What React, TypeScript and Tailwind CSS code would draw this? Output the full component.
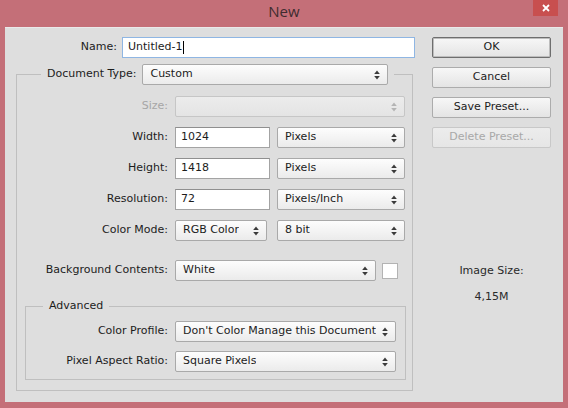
import type { ReactNode } from "react";

function Arrows({ disabled }: { disabled?: boolean }) {
  const c = disabled ? "#b4b4b4" : "#3a3a3a";
  return (
    <svg width="6" height="10" viewBox="0 0 6 10" className="shrink-0">
      <path d="M3 0.5 L5.8 4 L0.2 4 Z" fill={c} />
      <path d="M0.2 6 L5.8 6 L3 9.5 Z" fill={c} />
    </svg>
  );
}

function Select({
  value,
  width,
  disabled,
}: {
  value?: string;
  width: string;
  disabled?: boolean;
}) {
  return (
    <div
      className={`${width} h-[21px] shrink-0 flex items-center justify-between pl-[7px] pr-[7px] rounded-[2px] border ${
        disabled
          ? "border-[#c6c6c6] bg-gradient-to-b from-[#ececec] to-[#e4e4e4]"
          : "border-[#a9a9a9] bg-gradient-to-b from-[#fdfdfd] to-[#ebebeb]"
      }`}
    >
      <span className="truncate">{value}</span>
      <Arrows disabled={disabled} />
    </div>
  );
}

function Input({ value, width }: { value: string; width: string }) {
  return (
    <div
      className={`${width} h-[21px] shrink-0 flex items-center pl-[5px] bg-white border border-[#a3a3a3] border-t-[#8f8f8f]`}
    >
      {value}
    </div>
  );
}

function Row({
  label,
  labelWidth,
  disabled,
  children,
}: {
  label: string;
  labelWidth: string;
  disabled?: boolean;
  children: ReactNode;
}) {
  return (
    <div className="flex items-center h-[21px]">
      <span
        className={`${labelWidth} shrink-0 text-right pr-[7px] ${
          disabled ? "text-[#a6a6a6]" : ""
        }`}
      >
        {label}
      </span>
      {children}
    </div>
  );
}

function Button({
  children,
  primary,
  disabled,
}: {
  children: ReactNode;
  primary?: boolean;
  disabled?: boolean;
}) {
  const tone = primary
    ? "border-[#6e6e6e] shadow-[inset_0_0_0_1px_#bdbdbd] bg-gradient-to-b from-[#f7f7f7] to-[#e4e4e4]"
    : disabled
      ? "border-[#c8c8c8] text-[#a8a8a8] bg-gradient-to-b from-[#ececec] to-[#e6e6e6]"
      : "border-[#acacac] bg-gradient-to-b from-[#f7f7f7] to-[#e4e4e4]";
  return (
    <button
      type="button"
      className={`w-[119px] h-[21px] border rounded-[2px] flex items-center justify-center ${tone}`}
    >
      {children}
    </button>
  );
}

export default function App() {
  return (
    <div className="w-[568px] h-[408px] bg-[#c46f78] flex flex-col font-['DejaVu_Sans',sans-serif] text-[11px] text-[#1c1c1c] overflow-hidden">
      {/* title bar */}
      <div className="h-[27px] shrink-0 relative flex justify-center">
        <span className="font-['Open_Sans',sans-serif] text-[15px] leading-[22px] text-[#3e2c2f]">
          New
        </span>
        <div className="absolute right-[10px] top-0 w-[25px] h-[16px] bg-[#c84f4f] flex items-center justify-center">
          <svg width="8" height="8" viewBox="0 0 8 8">
            <path d="M1 1 L7 7 M7 1 L1 7" stroke="#fff" strokeWidth="1.8" />
          </svg>
        </div>
      </div>

      {/* dialog body */}
      <div className="mx-[5px] mb-[6px] flex-1 bg-[#dedede] border-t border-[#eaeaea] flex">
        {/* left column */}
        <div className="w-[427px] shrink-0 pt-[9px]">
          <div className="flex items-center h-[21px]">
            <span className="w-[117px] text-right pr-[5px]">Name:</span>
            <div className="w-[293px] h-[21px] flex items-center pl-[5px] bg-white border border-[#8fb6e3]">
              Untitled-1
              <span className="inline-block w-px h-[13px] bg-black ml-px" />
            </div>
          </div>

          <fieldset className="ml-[11px] mt-[6px] w-[397px] border border-[#bfbfbf] pb-[10px]">
            <legend className="ml-[24px] px-[6px] flex items-center">
              <span className="pr-[6px]">Document Type:</span>
              <Select value="Custom" width="w-[246px]" />
            </legend>

            <div className="mt-[11px] flex flex-col gap-[10px]">
              <Row label="Size:" labelWidth="w-[158px]" disabled>
                <Select width="w-[230px]" disabled />
              </Row>
              <Row label="Width:" labelWidth="w-[158px]">
                <Input value="1024" width="w-[95px]" />
                <div className="ml-[7px]">
                  <Select value="Pixels" width="w-[128px]" />
                </div>
              </Row>
              <Row label="Height:" labelWidth="w-[158px]">
                <Input value="1418" width="w-[95px]" />
                <div className="ml-[7px]">
                  <Select value="Pixels" width="w-[128px]" />
                </div>
              </Row>
              <Row label="Resolution:" labelWidth="w-[158px]">
                <Input value="72" width="w-[95px]" />
                <div className="ml-[7px]">
                  <Select value="Pixels/Inch" width="w-[128px]" />
                </div>
              </Row>
              <Row label="Color Mode:" labelWidth="w-[158px]">
                <Select value="RGB Color" width="w-[92px]" />
                <div className="ml-[10px]">
                  <Select value="8 bit" width="w-[128px]" />
                </div>
              </Row>
            </div>

            <div className="mt-[19px]">
              <Row label="Background Contents:" labelWidth="w-[158px]">
                <Select value="White" width="w-[201px]" />
                <div className="ml-[6px] w-[16px] h-[16px] bg-white border border-[#b3b3b3]" />
              </Row>
            </div>

            <fieldset className="ml-[8px] mt-[18px] w-[381px] border border-[#bfbfbf] pb-[7px]">
              <legend className="ml-[17px] px-[6px] leading-[14px]">Advanced</legend>
              <div className="mt-[8px] flex flex-col gap-[9px]">
                <Row label="Color Profile:" labelWidth="w-[149px]">
                  <Select value="Don't Color Manage this Document" width="w-[221px]" />
                </Row>
                <Row label="Pixel Aspect Ratio:" labelWidth="w-[149px]">
                  <Select value="Square Pixels" width="w-[221px]" />
                </Row>
              </div>
            </fieldset>
          </fieldset>
        </div>

        {/* right column */}
        <div className="w-[119px] shrink-0 pt-[9px] flex flex-col">
          <div className="flex flex-col gap-[9px]">
            <Button primary>OK</Button>
            <Button>Cancel</Button>
            <Button>Save Preset...</Button>
            <Button disabled>Delete Preset...</Button>
          </div>
          <div className="mt-[116px] flex flex-col items-center gap-[12px] leading-[14px] text-[#2a2a2a]">
            <span>Image Size:</span>
            <span>4,15M</span>
          </div>
        </div>
      </div>
    </div>
  );
}
